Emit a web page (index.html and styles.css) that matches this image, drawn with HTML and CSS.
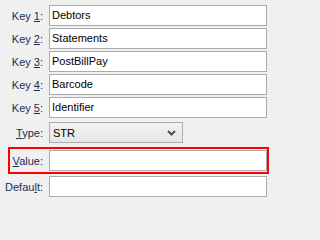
FILE: index.html
```html
<!DOCTYPE html>
<html>
<head>
<meta charset="utf-8">
<link rel="stylesheet" href="styles.css">
</head>
<body>
<div class="form">
  <div class="row">
    <label class="lbl">Key <u>1</u>:</label>
    <div class="field">Debtors</div>
  </div>
  <div class="row">
    <label class="lbl">Key <u>2</u>:</label>
    <div class="field">Statements</div>
  </div>
  <div class="row">
    <label class="lbl">Key <u>3</u>:</label>
    <div class="field">PostBillPay</div>
  </div>
  <div class="row">
    <label class="lbl">Key <u>4</u>:</label>
    <div class="field">Barcode</div>
  </div>
  <div class="row">
    <label class="lbl">Key <u>5</u>:</label>
    <div class="field">Identifier</div>
  </div>
  <div class="row row-select">
    <label class="lbl"><u>T</u>ype:</label>
    <div class="select">
      <span>STR</span>
      <svg class="chev" width="9" height="6" viewBox="0 0 9 6"><path d="M1 1 L4.5 4.5 L8 1" fill="none" stroke="#505050" stroke-width="2"/></svg>
    </div>
  </div>
  <div class="row row-error">
    <label class="lbl lbl-inner"><u>V</u>alue:</label>
    <div class="field"></div>
  </div>
  <div class="row row-default">
    <label class="lbl">Defau<u>l</u>t:</label>
    <div class="field"></div>
  </div>
</div>
</body>
</html>
```
FILE: styles.css
```css
html, body {
  margin: 0;
  padding: 0;
  background: #f0f0f0;
}
body {
  font-family: "Liberation Sans", Arial, sans-serif;
  font-size: 11px;
  width: 271px;
  height: 202px;
  overflow: hidden;
}
.form {
  padding-top: 5px;
  display: flex;
  flex-direction: column;
}
.row {
  display: flex;
  align-items: center;
  height: 21px;
  margin-bottom: 2px;
}
.lbl {
  width: 43px;
  text-align: right;
  margin-right: 6px;
  color: #1e2d52;
  white-space: nowrap;
}
.lbl u {
  text-decoration-thickness: 1px;
  text-underline-offset: 1px;
}
.field {
  box-sizing: border-box;
  width: 218px;
  height: 21px;
  border: 1px solid #ababab;
  background: #fff;
  color: #000;
  padding: 0 2px;
  line-height: 19px;
  white-space: nowrap;
}
.row-select {
  margin-top: 2px;
  margin-bottom: 0;
}
.select {
  box-sizing: border-box;
  width: 134px;
  height: 21px;
  border: 1px solid #acacac;
  background: linear-gradient(#f2f2f2, #e6e6e6);
  color: #000;
  padding: 0 6px 0 3px;
  display: flex;
  align-items: center;
  justify-content: space-between;
}
.chev {
  display: block;
  margin-top: 1px;
}
.row-error {
  margin-top: 4px;
  margin-left: 8px;
  width: 261px;
  height: 27px;
  box-sizing: border-box;
  border: 2px solid #ff0000;
  padding: 1px 0;
  margin-bottom: 2px;
}
.lbl-inner {
  width: 33px;
}
.row-default {
  margin-bottom: 0;
}
```
